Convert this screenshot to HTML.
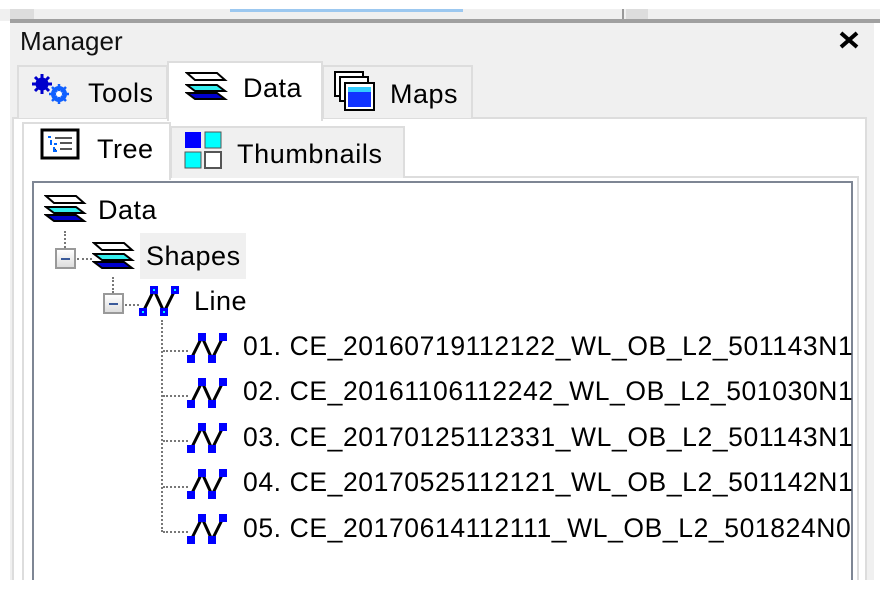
<!DOCTYPE html>
<html><head><meta charset="utf-8"><style>
*{margin:0;padding:0;box-sizing:border-box}
body{width:880px;height:593px;background:#fff;position:relative;overflow:hidden;font-family:"Liberation Sans",sans-serif;color:#000}
.a{position:absolute}
.t{position:absolute;font-size:27px;white-space:nowrap;line-height:32px}
.it{letter-spacing:0.6px}
.hd{border-top:2px dotted #777}
.vd{border-left:2px dotted #777}
.exp{position:absolute;width:21px;height:21px;border:2px solid #999;background:linear-gradient(#fff,#ddd)}
.exp:after{content:"";position:absolute;left:4px;top:8px;width:9px;height:2px;background:#3a5a9a}
</style></head><body>
<div class="a" style="left:0;top:9px;width:880px;height:12px;background:#f0f0f0"></div>
<div class="a" style="left:10px;top:9px;width:24px;height:10px;background:#ddd"></div>
<div class="a" style="left:230px;top:9px;width:233px;height:3px;background:#9cc8f0"></div>
<div class="a" style="left:622px;top:9px;width:2px;height:10px;background:#999"></div>
<div class="a" style="left:626px;top:9px;width:22px;height:10px;background:#ddd"></div>
<div class="a" style="left:10px;top:19px;width:870px;height:4px;background:#a0a0a0"></div>
<div class="a" style="left:10px;top:23px;width:864px;height:557px;background:#f0f0f0"></div>
<div class="t" style="left:20px;top:25px;font-size:26px;color:#111">Manager</div>
<svg class="a" style="left:838px;top:30px" width="22" height="20"><path d="M3 3L19 17M19 3L3 17" stroke="#000" stroke-width="4"/></svg>
<div class="a" style="left:12px;top:117px;width:855px;height:463px;background:#fff;border:2px solid #ddd;border-bottom:none"></div>
<div class="a" style="left:17px;top:65px;width:151px;height:53px;background:#f0f0f0;border:2px solid #ddd;border-bottom:none"></div>
<div class="a" style="left:322px;top:65px;width:151px;height:53px;background:#f0f0f0;border:2px solid #ddd;border-bottom:none"></div>
<div class="a" style="left:167px;top:61px;width:156px;height:60px;background:#fff;border:2px solid #ddd;border-bottom:none"></div>
<svg class="a" style="left:30px;top:70px" width="45" height="40"><g fill="#00c" stroke="#00c"><circle cx="12" cy="14" r="6"/><path d="M12 4v20M2 14h20M5 7l14 14M19 7L5 21" stroke-width="3"/></g><g stroke="#1060ff" fill="none"><circle cx="29" cy="24" r="6" stroke-width="4"/><path d="M29 14v20M19 24h20M22 17l14 14M36 17l-14 14" stroke-width="2.5"/></g><circle cx="29" cy="24" r="3" fill="#fff"/></svg>
<div class="t" style="left:88px;top:77px;letter-spacing:0.5px">Tools</div>
<svg class="a" style="left:185px;top:70px" width="45" height="32"><path d="M2 23h30l8 6H10z" fill="#00c" stroke="#000" stroke-width="2"/><path d="M2 15h30l8 6H10z" fill="#3ee" stroke="#000" stroke-width="2"/><path d="M2 3h30l8 7H10z" fill="#fff" stroke="#000" stroke-width="2"/></svg>
<div class="t" style="left:243px;top:72px;letter-spacing:0.5px">Data</div>
<svg class="a" style="left:333px;top:70px" width="44" height="42"><rect x="2" y="2" width="28" height="24" fill="#fff" stroke="#000" stroke-width="2"/><rect x="7" y="7" width="28" height="24" fill="#fff" stroke="#000" stroke-width="2"/><rect x="12" y="13" width="29" height="27" fill="#fff" stroke="#000" stroke-width="2"/><rect x="15" y="17" width="23" height="20" fill="#13f"/><rect x="15" y="17" width="23" height="5" fill="#3cf"/></svg>
<div class="t" style="left:390px;top:78px;letter-spacing:0.5px">Maps</div>
<div class="a" style="left:22px;top:176px;width:837px;height:404px;background:#fff;border:2px solid #ddd;border-bottom:none"></div>
<div class="a" style="left:170px;top:126px;width:235px;height:52px;background:#f0f0f0;border:2px solid #ddd;border-bottom:none"></div>
<div class="a" style="left:22px;top:122px;width:149px;height:58px;background:#fff;border:2px solid #ddd;border-bottom:none"></div>
<svg class="a" style="left:40px;top:128px" width="42" height="34"><rect x="2" y="2" width="36" height="28" fill="#fff" stroke="#000" stroke-width="3"/><path d="M8 9h3M11 12v5M14 16h3M14 19v4h3" stroke="#06f" stroke-width="2"/><path d="M15 10h17M20 15h12M20 21h12" stroke="#555" stroke-width="2"/></svg>
<div class="t" style="left:97px;top:133px;letter-spacing:0.5px">Tree</div>
<svg class="a" style="left:184px;top:131px" width="40" height="40"><rect x="1" y="1" width="16" height="16" fill="#00f"/><rect x="21" y="1" width="16" height="16" fill="#0ff" stroke="#555"/><rect x="1" y="21" width="16" height="16" fill="#0ff" stroke="#555"/><rect x="21" y="21" width="16" height="16" fill="#fff" stroke="#555" stroke-width="2"/></svg>
<div class="t" style="left:237px;top:138px;letter-spacing:0.6px">Thumbnails</div>
<div class="a" style="left:32px;top:181px;width:821px;height:399px;background:#fff;border:2px solid #7e8694;border-bottom:none;overflow:hidden">
<div class="a" style="left:106px;top:50px;width:106px;height:46px;background:#f0f0f0"></div>
</div>
<svg class="a" style="left:44px;top:193px" width="48" height="34"><path d="M2 22h30l8 6H10z" fill="#00c" stroke="#000" stroke-width="2"/><path d="M2 14h30l8 6H10z" fill="#3ee" stroke="#000" stroke-width="2"/><path d="M2 3h30l8 7H10z" fill="#fff" stroke="#000" stroke-width="2"/></svg>
<div class="t" style="left:98px;top:194px;letter-spacing:0.5px">Data</div>
<div class="a vd" style="left:64px;top:231px;height:17px"></div>
<div class="exp" style="left:55px;top:248px"></div>
<div class="a hd" style="left:77px;top:258px;width:15px"></div>
<svg class="a" style="left:92px;top:240px" width="48" height="34"><path d="M2 22h30l8 6H10z" fill="#00c" stroke="#000" stroke-width="2"/><path d="M2 14h30l8 6H10z" fill="#3ee" stroke="#000" stroke-width="2"/><path d="M2 3h30l8 7H10z" fill="#fff" stroke="#000" stroke-width="2"/></svg>
<div class="t" style="left:146px;top:240px;letter-spacing:0.5px">Shapes</div>
<div class="a vd" style="left:112px;top:277px;height:16px"></div>
<div class="exp" style="left:103px;top:293px"></div>
<div class="a hd" style="left:125px;top:304px;width:14px"></div>
<svg class="a" style="left:138px;top:284px" width="44" height="34"><path d="M5 28L16 6L26 28L37 6" stroke="#000" stroke-width="3" fill="none"/><g fill="#0000ff"><rect x="1" y="24" width="8" height="8"/><rect x="12" y="2" width="8" height="8"/><rect x="22" y="24" width="8" height="8"/><rect x="33" y="2" width="8" height="8"/></g><g fill="#0ff"><rect x="4" y="27" width="2" height="2"/><rect x="15" y="5" width="2" height="2"/><rect x="25" y="27" width="2" height="2"/><rect x="36" y="5" width="2" height="2"/></g></svg>
<div class="t" style="left:194px;top:285px;letter-spacing:0.5px">Line</div>
<div class="a vd" style="left:161px;top:320px;height:212px"></div>
<div style="position:absolute;left:0;top:0;width:852px;height:593px;overflow:hidden">
<div class="a hd" style="left:163px;top:350px;width:25px"></div>
<div class="a hd" style="left:163px;top:395px;width:25px"></div>
<div class="a hd" style="left:163px;top:440px;width:25px"></div>
<div class="a hd" style="left:163px;top:486px;width:25px"></div>
<div class="a hd" style="left:163px;top:531px;width:25px"></div>
<svg class="a" style="left:186px;top:331px" width="44" height="34"><path d="M5 28L16 6L26 28L37 6" stroke="#000" stroke-width="3" fill="none"/><g fill="#0000ff"><rect x="1" y="24" width="8" height="8"/><rect x="12" y="2" width="8" height="8"/><rect x="22" y="24" width="8" height="8"/><rect x="33" y="2" width="8" height="8"/></g></svg>
<svg class="a" style="left:186px;top:376px" width="44" height="34"><path d="M5 28L16 6L26 28L37 6" stroke="#000" stroke-width="3" fill="none"/><g fill="#0000ff"><rect x="1" y="24" width="8" height="8"/><rect x="12" y="2" width="8" height="8"/><rect x="22" y="24" width="8" height="8"/><rect x="33" y="2" width="8" height="8"/></g></svg>
<svg class="a" style="left:186px;top:421px" width="44" height="34"><path d="M5 28L16 6L26 28L37 6" stroke="#000" stroke-width="3" fill="none"/><g fill="#0000ff"><rect x="1" y="24" width="8" height="8"/><rect x="12" y="2" width="8" height="8"/><rect x="22" y="24" width="8" height="8"/><rect x="33" y="2" width="8" height="8"/></g></svg>
<svg class="a" style="left:186px;top:467px" width="44" height="34"><path d="M5 28L16 6L26 28L37 6" stroke="#000" stroke-width="3" fill="none"/><g fill="#0000ff"><rect x="1" y="24" width="8" height="8"/><rect x="12" y="2" width="8" height="8"/><rect x="22" y="24" width="8" height="8"/><rect x="33" y="2" width="8" height="8"/></g></svg>
<svg class="a" style="left:186px;top:512px" width="44" height="34"><path d="M5 28L16 6L26 28L37 6" stroke="#000" stroke-width="3" fill="none"/><g fill="#0000ff"><rect x="1" y="24" width="8" height="8"/><rect x="12" y="2" width="8" height="8"/><rect x="22" y="24" width="8" height="8"/><rect x="33" y="2" width="8" height="8"/></g></svg>
<div class="t it" style="left:243px;top:330px;font-size:26.5px">01. CE_20160719112122_WL_OB_L2_501143N10</div>
<div class="t it" style="left:243px;top:375px;font-size:26.5px">02. CE_20161106112242_WL_OB_L2_501030N10</div>
<div class="t it" style="left:243px;top:421px;font-size:26.5px">03. CE_20170125112331_WL_OB_L2_501143N10</div>
<div class="t it" style="left:243px;top:466px;font-size:26.5px">04. CE_20170525112121_WL_OB_L2_501142N10</div>
<div class="t it" style="left:243px;top:512px;font-size:26.5px">05. CE_20170614112111_WL_OB_L2_501824N00</div>
</div>
<div class="a" style="left:0;top:580px;width:880px;height:13px;background:#fff"></div>
</body></html>
